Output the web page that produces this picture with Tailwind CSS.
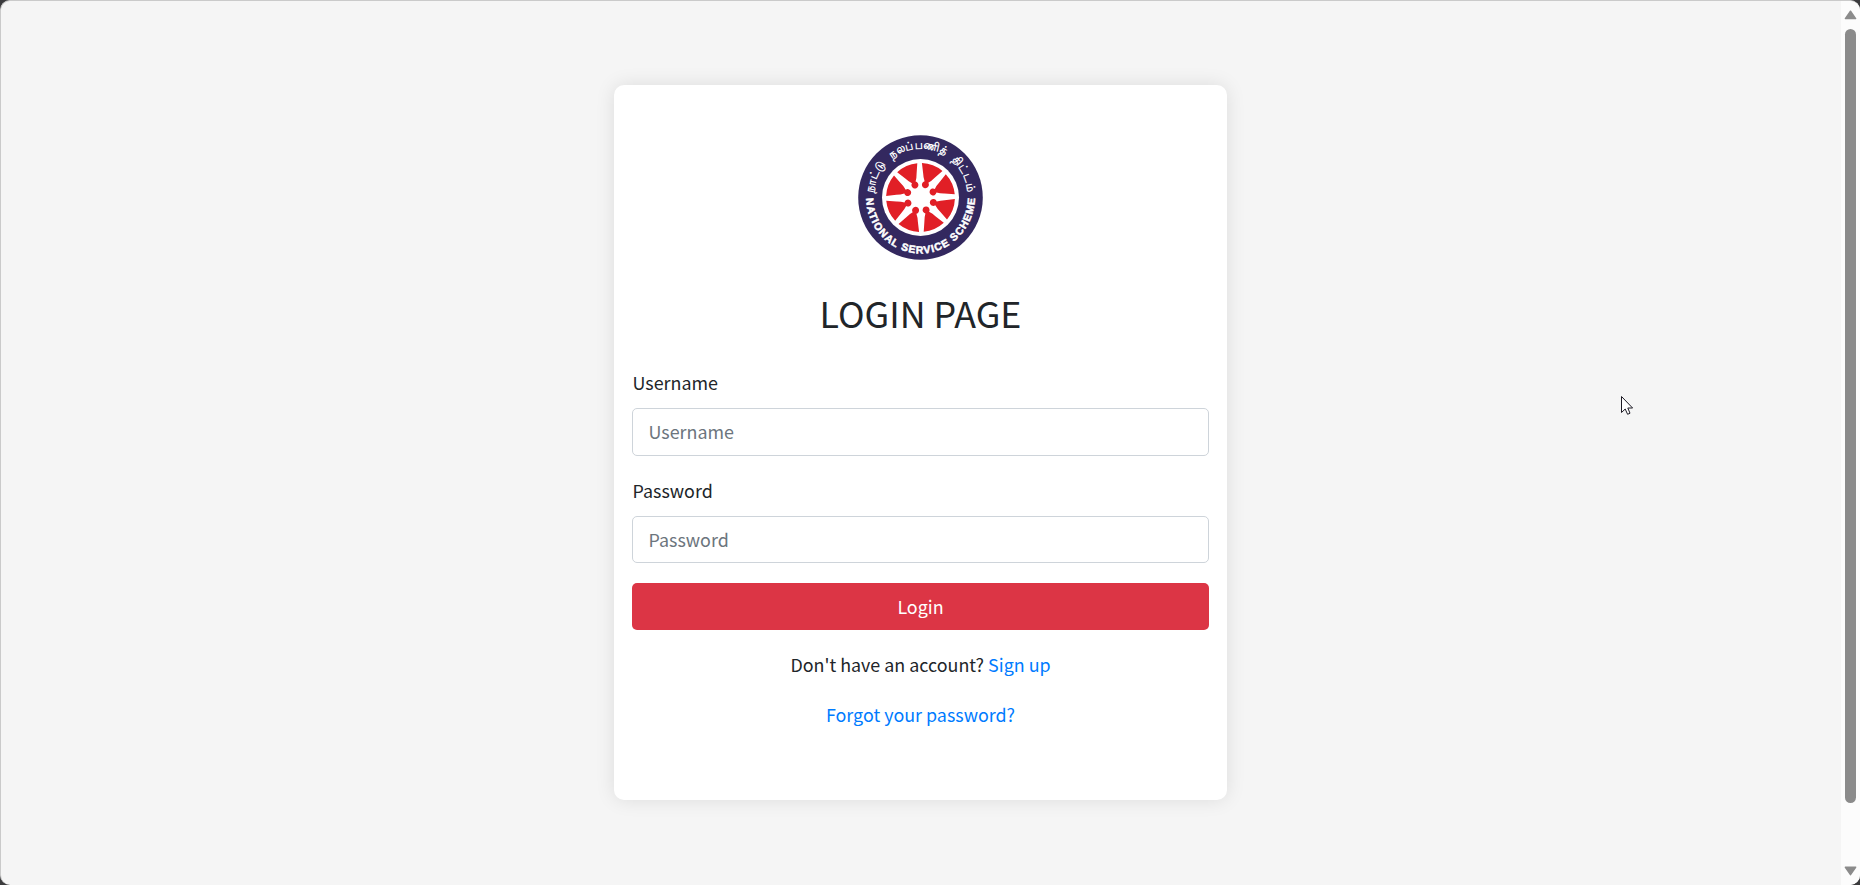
<!DOCTYPE html>
<html lang="en">
<head>
<meta charset="utf-8">
<title>Login</title>
<script src="https://cdn.jsdelivr.net/npm/@tailwindcss/browser@4"></script>
</head>
<body class="bg-[#3b3b3d] font-['Noto_Sans_CJK_SC','Noto_Sans',sans-serif] text-[17.9px] leading-[28px] text-[#212529]">
<div class="flex h-[885px] w-[1860px] overflow-hidden rounded-[10px] border-t border-l border-[#cacaca] bg-[#f5f5f5]">
  <main class="flex flex-1 justify-center pt-[84px] pr-[2px]">
    <form class="flex h-[715px] w-[613px] flex-col rounded-[10px] bg-white px-[18px] pt-[50px] shadow-[0_0_19px_rgba(0,0,0,0.1)]">
      <svg class="h-[125px] w-[125px] shrink-0 self-center" viewBox="0 0 125 125">
        <defs>
          <path id="top" d="M15.5 62.5A47 49 0 0 1 109.5 62.5"/>
          <path id="bottom" d="M8 61.5A54.5 57 0 0 0 117 61.5"/>
          <path id="wedge" d="M-11 -32.6A34.4 34.4 0 0 1 11 -32.6L6.2 -23.5Q4.5 -19.5 2 -16.6A3.5 3.5 0 1 1 -2 -16.6Q-4.5 -19.5 -6.2 -23.5Z"/>
        </defs>
        <circle cx="62.5" cy="62.5" r="62.3" fill="#33285f"/>
        <circle cx="62.5" cy="62.5" r="38.5" fill="#fff"/>
        <g fill="#e11f26" transform="translate(62.5 62.5) rotate(-1.5)">
          <use href="#wedge" transform="rotate(22.5)"/><use href="#wedge" transform="rotate(67.5)"/><use href="#wedge" transform="rotate(112.5)"/><use href="#wedge" transform="rotate(157.5)"/><use href="#wedge" transform="rotate(202.5)"/><use href="#wedge" transform="rotate(247.5)"/><use href="#wedge" transform="rotate(292.5)"/><use href="#wedge" transform="rotate(337.5)"/>
        </g>
        <g fill="#fff" font-weight="700" text-anchor="middle">
          <text font-size="11.5" word-spacing="5" font-family="Noto Sans, sans-serif"><textPath href="#top" startOffset="50%" textLength="142" lengthAdjust="spacingAndGlyphs">நாட்டு நலப்பணித் திட்டம்</textPath></text>
          <text font-size="10.4" font-family="Liberation Sans, sans-serif" stroke="#fff" stroke-width=".5"><textPath href="#bottom" startOffset="50%" textLength="171" lengthAdjust="spacing">NATIONAL SERVICE SCHEME</textPath></text>
        </g>
      </svg>
      <h1 class="mt-[28px] pl-px text-center text-[35.8px] leading-[48px]">LOGIN PAGE</h1>
      <label for="user" class="mt-[32px] pb-[2px] pl-px">Username</label>
      <input id="user" type="text" placeholder="Username" class="mt-[10px] h-[48px] w-full rounded-[5px] border border-[#ced4da] px-4 pb-[3px] outline-none placeholder:text-[#6c757d]">
      <label for="pass" class="mt-5 pb-[2px] pl-px">Password</label>
      <input id="pass" type="password" placeholder="Password" class="mt-[10px] h-[47px] w-full rounded-[5px] border border-[#ced4da] px-4 pb-[2px] outline-none placeholder:text-[#6c757d]">
      <button type="button" class="mt-5 h-[47px] shrink-0 rounded-[5px] bg-[#dc3545] pb-[2px] pl-px text-white">Login</button>
      <p class="mt-5 pb-[2px] pl-px text-center">Don't have an account? <a class="text-[#007bff]">Sign up</a></p>
      <p class="mt-5 pb-[2px] pl-px text-center"><a class="text-[#007bff]">Forgot your password?</a></p>
    </form>
  </main>
  <aside class="flex w-[19px] flex-col items-center bg-[#fcfcfc] pt-[9px]">
    <svg class="h-[10px] w-[13px]" viewBox="0 0 13 10"><path d="M6.5 1.2L11.6 8.6H1.4Z" fill="#8b8b8b" stroke="#8b8b8b" stroke-width="1.5" stroke-linejoin="round"/></svg>
    <div class="mt-[9px] h-[774px] w-[11px] rounded-full bg-[#8b8b8b]"></div>
    <svg class="mt-[63px] h-[10px] w-[13px]" viewBox="0 0 13 10"><path d="M6.5 8.6L11.6 1.2H1.4Z" fill="#8b8b8b" stroke="#8b8b8b" stroke-width="1.5" stroke-linejoin="round"/></svg>
  </aside>
</div>
<svg class="pointer-events-none absolute top-[395px] left-[1620px] h-[21px] w-[14px]" viewBox="0 0 14 21"><path d="M1.5 1.5V17.5L5.2 14L7.6 19.3L10 18.2L7.8 13H12.6Z" fill="#fff" stroke="#1c1a24" stroke-width="1"/></svg>
</body>
</html>
